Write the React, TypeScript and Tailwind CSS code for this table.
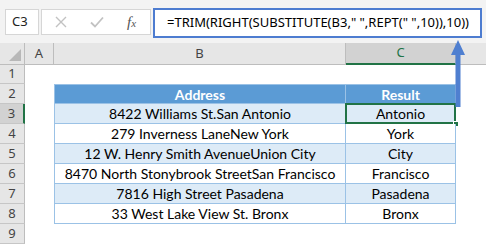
import React from 'react';

type Row = { address: string; result: string };

const rows: Row[] = [
  { address: '8422 Williams St.San Antonio', result: 'Antonio' },
  { address: '279 Inverness LaneNew York', result: 'York' },
  { address: '12 W. Henry Smith AvenueUnion City', result: 'City' },
  { address: '8470 North Stonybrook StreetSan Francisco', result: 'Francisco' },
  { address: '7816 High Street Pasadena', result: 'Pasadena' },
  { address: '33 West Lake View St. Bronx', result: 'Bronx' },
];

const uiFont = "font-['Segoe_UI','Noto_Sans','Liberation_Sans',sans-serif]";
const cellFont = "font-['Lato','Liberation_Sans',sans-serif]";

function RowHeader({ n, active }: { n: number; active?: boolean }) {
  return (
    <div
      className={`h-[20px] flex items-center justify-center text-[13px] text-[#444] border-b border-[#c6c6c6] ${
        active ? 'bg-[#d2d2d2] border-r-2 border-r-[#217346]' : 'bg-[#e6e6e6] border-r border-r-[#bdbdbd]'
      } ${uiFont}`}
    >
      {n}
    </div>
  );
}

function Toolbar() {
  return (
    <div className="h-[43px] bg-[#f3f3f3] flex items-start pt-[9px] pl-[5px] gap-[2px]">
      <div className={`w-[34px] h-[26px] bg-white border border-[#d6d6d6] flex items-center pl-[6px] text-[13px] text-[#222] ${uiFont}`}>
        C3
      </div>
      <div className="w-[110px] h-[26px] bg-white border border-[#d6d6d6] flex items-center">
        <svg className="ml-[13px]" width="12" height="12" viewBox="0 0 12 12">
          <path d="M1 1 L11 11 M11 1 L1 11" stroke="#c2c2c2" strokeWidth="1.4" fill="none" />
        </svg>
        <svg className="ml-[23px]" width="14" height="12" viewBox="0 0 14 12">
          <path d="M1 6.5 L5 10.5 L13 1.5" stroke="#c2c2c2" strokeWidth="1.8" fill="none" />
        </svg>
        <span className="ml-[23px] text-[15px] italic text-[#555] font-['Liberation_Serif',serif] leading-none">
          f<span className="text-[11px]">x</span>
        </span>
      </div>
      <div
        className={`w-[329px] h-[30px] -mt-[1px] bg-white border-2 border-[#4d7cd0] flex items-center pl-[12px] text-[13px] text-black whitespace-pre overflow-hidden ${uiFont}`}
      >
        =TRIM(RIGHT(SUBSTITUTE(B3," ",REPT(" ",10)),10))
      </div>
    </div>
  );
}

function ColumnHeaders() {
  return (
    <div className={`grid grid-cols-[25px_29px_292px_110px_1fr] h-[21px] bg-[#e6e6e6] text-[13px] text-[#444] ${uiFont}`}>
      <div className="relative border-r border-b border-[#bdbdbd]">
        <div className="absolute right-[3px] bottom-[3px] w-0 h-0 border-l-[12px] border-l-transparent border-b-[12px] border-b-[#b8b8b8]" />
      </div>
      <div className="flex items-center justify-center border-r border-b border-[#bdbdbd]">A</div>
      <div className="flex items-center justify-center border-r border-b border-[#bdbdbd]">B</div>
      <div className="flex items-center justify-center bg-[#d2d2d2] text-[#217346] border-r border-[#bdbdbd] border-b-2 border-b-[#217346]">
        C
      </div>
      <div className="border-b border-[#bdbdbd]" />
    </div>
  );
}

export default function App() {
  return (
    <div className="w-[486px] h-[245px] bg-white overflow-hidden relative">
      <Toolbar />
      <ColumnHeaders />

      <div className="grid grid-cols-[25px_29px_292px_110px_1fr] auto-rows-[20px]">
        {/* row 1 */}
        <RowHeader n={1} />
        <div className="col-span-4" />

        {/* row 2: table header */}
        <RowHeader n={2} />
        <div />
        <div className={`bg-[#5b9bd5] border border-[#9bc2e6] flex items-center justify-center text-white font-bold text-[14px] ${cellFont}`}>
          Address
        </div>
        <div className={`bg-[#5b9bd5] border-y border-r border-[#9bc2e6] flex items-center justify-center text-white font-bold text-[14px] ${cellFont}`}>
          Result
        </div>
        <div />

        {rows.map((r, i) => {
          const shaded = i % 2 === 0;
          const bg = shaded ? 'bg-[#ddebf7]' : 'bg-white';
          return (
            <React.Fragment key={r.address}>
              <RowHeader n={i + 3} active={i === 0} />
              <div />
              <div className={`${bg} border-x border-b border-[#9bc2e6] flex items-center justify-center text-[14px] text-black ${cellFont}`}>
                {r.address}
              </div>
              <div className={`relative ${bg} border-r border-b border-[#9bc2e6] flex items-center justify-center text-[14px] text-black ${cellFont}`}>
                {r.result}
                {i === 0 && (
                  <>
                    <div className="absolute -left-[1px] -top-[1px] -right-[1px] -bottom-[1px] border-2 border-[#217346]" />
                    <div className="absolute -right-[4px] -bottom-[4px] w-[6px] h-[6px] bg-[#217346] border border-white" />
                  </>
                )}
              </div>
              <div />
            </React.Fragment>
          );
        })}

        {/* row 9 */}
        <RowHeader n={9} />
        <div className="col-span-4" />
      </div>

      {/* callout arrow from C3 up to the formula bar */}
      <svg className="absolute left-[450px] top-[39px]" width="16" height="70" viewBox="0 0 16 70">
        <path d="M8 1 L15 16 L10.5 16 L10.5 68 L5.5 68 L5.5 16 L1 16 Z" fill="#4f7fd0" />
      </svg>
    </div>
  );
}
